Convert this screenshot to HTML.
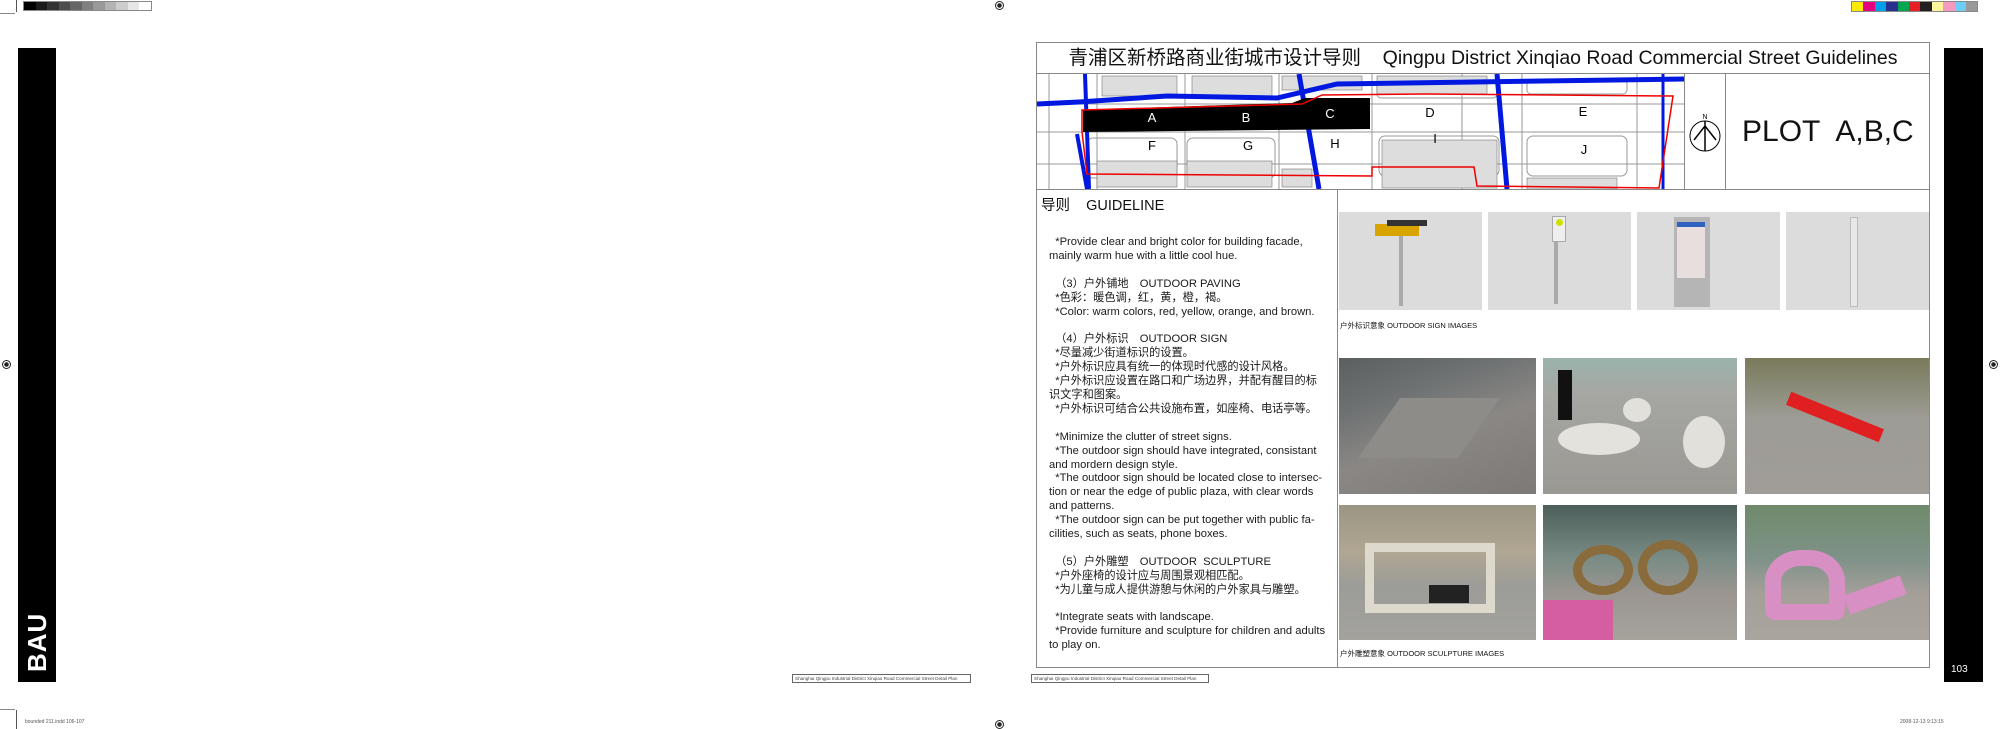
<!DOCTYPE html>
<html><head><meta charset="utf-8"><style>
*{margin:0;padding:0;box-sizing:border-box}
body{width:2000px;height:729px;background:#fff;position:relative;overflow:hidden;font-family:"Liberation Sans","Noto Sans CJK SC",sans-serif;color:#111}
.a{position:absolute}
.txt{font-size:11.2px;line-height:13.9px;white-space:pre;color:#1a1a1a}
.img{position:absolute;background:#888}
.foot{position:absolute;border:1px solid #666;font-size:4.6px;line-height:7px;padding:0 2px;color:#444;white-space:nowrap;height:9px;overflow:hidden}
.reg{position:absolute;width:9px;height:9px;border-radius:50%;border:1px solid #222;background:radial-gradient(circle,#222 0 2px,transparent 2.5px)}
</style></head><body>
<div class="a" style="left:16px;top:0;width:1px;height:12px;background:#555"></div>
<div class="a" style="left:23px;top:1px;display:flex;border:1px solid #888">
<div style="width:11.5px;height:8px;background:#000"></div><div style="width:11.5px;height:8px;background:#1a1a1a"></div><div style="width:11.5px;height:8px;background:#333"></div><div style="width:11.5px;height:8px;background:#4d4d4d"></div><div style="width:11.5px;height:8px;background:#666"></div><div style="width:11.5px;height:8px;background:#808080"></div><div style="width:11.5px;height:8px;background:#999"></div><div style="width:11.5px;height:8px;background:#b3b3b3"></div><div style="width:11.5px;height:8px;background:#ccc"></div><div style="width:11.5px;height:8px;background:#e6e6e6"></div><div style="width:11.5px;height:8px;background:#fff"></div></div>
<div class="a" style="left:1851px;top:1px;display:flex;border:1px solid #888">
<div style="width:11.4px;height:9px;background:#ffea00"></div><div style="width:11.4px;height:9px;background:#e5007f"></div><div style="width:11.4px;height:9px;background:#00a0e9"></div><div style="width:11.4px;height:9px;background:#2a2f8f"></div><div style="width:11.4px;height:9px;background:#00a651"></div><div style="width:11.4px;height:9px;background:#e71f23"></div><div style="width:11.4px;height:9px;background:#231f20"></div><div style="width:11.4px;height:9px;background:#fff59a"></div><div style="width:11.4px;height:9px;background:#f49ac1"></div><div style="width:11.4px;height:9px;background:#6dcff6"></div><div style="width:11.4px;height:9px;background:#999"></div></div>
<div class="reg" style="left:995px;top:1px"></div>
<div class="reg" style="left:995px;top:720px"></div>
<div class="reg" style="left:2px;top:360px"></div>
<div class="reg" style="left:1989px;top:360px"></div>
<div class="a" style="left:0;top:13px;width:15px;height:1px;background:#888"></div>
<div class="a" style="left:0;top:709px;width:15px;height:1px;background:#888"></div>
<div class="a" style="left:16px;top:710px;width:1px;height:19px;background:#555"></div>
<div class="a" style="left:25px;top:719px;font-size:5px;color:#555">bounded 211.indd 106-107</div>
<div class="a" style="left:1900px;top:719px;font-size:5px;color:#555">2008-12-13 9:13:15</div>

<div class="a" style="left:18px;top:48px;width:38px;height:634px;background:#000"></div>
<div class="a" style="left:22px;color:#fff;font-weight:bold;font-size:26px;transform:rotate(-90deg);transform-origin:0 0;letter-spacing:1px;top:672px">BAU</div>

<div class="a" style="left:1944px;top:48px;width:39px;height:634px;background:#000"></div>
<div class="a" style="left:1951px;top:664px;color:#fff;font-size:10px">103</div>

<div class="a" style="left:1036px;top:42px;width:894px;height:626px;border:1px solid #888"></div>
<div class="a" style="left:1036px;top:73px;width:894px;height:1px;background:#888"></div>
<div class="a" style="left:1036px;top:189px;width:894px;height:1px;background:#888"></div>
<div class="a" style="left:1337px;top:189px;width:1px;height:479px;background:#888"></div>
<div class="a" style="left:1684px;top:73px;width:1px;height:116px;background:#888"></div>
<div class="a" style="left:1725px;top:73px;width:1px;height:116px;background:#888"></div>
<div class="a" style="left:1036px;top:45px;width:894px;text-align:center;font-size:19.5px;line-height:26px;white-space:nowrap">青浦区新桥路商业街城市设计导则&nbsp;&nbsp;&nbsp; Qingpu District Xinqiao Road Commercial Street Guidelines</div>

<svg class="a" style="left:1037px;top:74px" width="647" height="115" viewBox="0 0 647 115">
<rect width="647" height="115" fill="#fff"/>
<g stroke="#999" fill="none" stroke-width="1">
<path d="M0 30 H647 M0 58 H647 M0 90 H647"/>
<path d="M12 0 V115 M60 0 V115 M148 0 V115 M242 0 V115 M335 0 V115 M425 0 V115 M485 0 V115 M600 0 V115"/>
<rect x="50" y="64" width="90" height="40" rx="6"/><rect x="150" y="64" width="88" height="40" rx="6"/><rect x="342" y="62" width="120" height="40" rx="6"/><rect x="490" y="62" width="100" height="40" rx="6"/>
<rect x="340" y="6" width="120" height="18" rx="4"/><rect x="490" y="6" width="100" height="14" rx="4"/>
</g>
<g fill="#ddd" stroke="#777" stroke-width=".6">
<rect x="65" y="2" width="75" height="20"/><rect x="155" y="2" width="80" height="20"/><rect x="245" y="2" width="80" height="14"/><rect x="340" y="2" width="110" height="18"/>
<rect x="60" y="87" width="80" height="26"/><rect x="150" y="87" width="85" height="26"/><rect x="245" y="95" width="30" height="18"/><rect x="345" y="66" width="115" height="48"/><rect x="490" y="104" width="90" height="11"/>
</g>
<path d="M0 30 L42 28 L130 22 L240 24 L300 10 L647 5" stroke="#0018e0" stroke-width="5" fill="none"/>
<path d="M48 0 L52 115" stroke="#0018e0" stroke-width="4"/>
<path d="M40 60 L50 115" stroke="#0018e0" stroke-width="4"/>
<path d="M262 0 L282 115" stroke="#0018e0" stroke-width="5"/>
<path d="M460 0 L470 115" stroke="#0018e0" stroke-width="5"/>
<path d="M626 0 L626 115" stroke="#0018e0" stroke-width="3"/>
<path d="M46 36 L160 32 L255 29 L268 24 L333 24 L333 55 L46 58Z" fill="#000"/>
<path d="M45 36 L265 30 L285 21 L390 20 L636 22 L622 114 L440 112 L437 93 L335 93 L335 102 L50 100 L45 58Z" fill="none" stroke="#e00" stroke-width="1.5"/>
<g font-size="13" font-family="Liberation Sans,sans-serif" text-anchor="middle">
<text x="115" y="48" fill="#fff">A</text><text x="209" y="48" fill="#fff">B</text><text x="293" y="44" fill="#fff">C</text>
<text x="393" y="43">D</text><text x="546" y="42">E</text><text x="115" y="76">F</text><text x="211" y="76">G</text><text x="298" y="74">H</text><text x="398" y="69">I</text><text x="547" y="80">J</text>
</g>
</svg>
<svg class="a" style="left:1687px;top:112px" width="36" height="42" viewBox="0 0 36 42">
<circle cx="18" cy="24" r="15" fill="none" stroke="#000" stroke-width="1"/>
<path d="M18 9 V39 M7 28 L18 14 L29 28" stroke="#000" fill="none" stroke-width="1.5"/>
<text x="18" y="7" font-size="7" text-anchor="middle" font-family="Liberation Sans">N</text></svg>
<div class="a" style="left:1742px;top:114px;font-size:30px;line-height:36px;white-space:nowrap">PLOT&nbsp; A,B,C</div>

<div class="a" style="left:1041px;top:194px;font-size:14.5px">导则&nbsp;&nbsp;&nbsp; GUIDELINE</div>
<div class="a txt" style="left:1049px;top:236px">  *Provide clear and bright color for building facade,
mainly warm hue with a little cool hue.

  （3）户外铺地　OUTDOOR PAVING
  *色彩：暖色调，红，黄，橙，褐。
  *Color: warm colors, red, yellow, orange, and brown.

  （4）户外标识　OUTDOOR SIGN
  *尽量减少街道标识的设置。
  *户外标识应具有统一的体现时代感的设计风格。
  *户外标识应设置在路口和广场边界，并配有醒目的标
识文字和图案。
  *户外标识可结合公共设施布置，如座椅、电话亭等。

  *Minimize the clutter of street signs.
  *The outdoor sign should have integrated, consistant
and mordern design style.
  *The outdoor sign should be located close to intersec-
tion or near the edge of public plaza, with clear words
and patterns.
  *The outdoor sign can be put together with public fa-
cilities, such as seats, phone boxes.

  （5）户外雕塑　OUTDOOR  SCULPTURE
  *户外座椅的设计应与周围景观相匹配。
  *为儿童与成人提供游憩与休闲的户外家具与雕塑。

  *Integrate seats with landscape.
  *Provide furniture and sculpture for children and adults
to play on.</div>

<div class="img" style="left:1339px;top:212px;width:143px;height:98px;background:#dcdcdc"><div class="a" style="left:60px;top:14px;width:4px;height:80px;background:#aaa"></div><div class="a" style="left:36px;top:12px;width:44px;height:12px;background:#d8a400"></div><div class="a" style="left:48px;top:8px;width:40px;height:6px;background:#333"></div></div>
<div class="img" style="left:1488px;top:212px;width:143px;height:98px;background:#dcdcdc"><div class="a" style="left:66px;top:4px;width:4px;height:88px;background:#aaa"></div><div class="a" style="left:64px;top:4px;width:14px;height:26px;background:#eee;border:1px solid #aaa"></div><div class="a" style="left:68px;top:7px;width:7px;height:7px;border-radius:50%;background:#cde000"></div></div>
<div class="img" style="left:1637px;top:212px;width:143px;height:98px;background:#dcdcdc"><div class="a" style="left:37px;top:5px;width:36px;height:90px;background:#b5b5b5"></div><div class="a" style="left:40px;top:10px;width:28px;height:56px;background:#e9dede"></div><div class="a" style="left:40px;top:10px;width:28px;height:5px;background:#3060c0"></div></div>
<div class="img" style="left:1786px;top:212px;width:143px;height:98px;background:#dcdcdc"><div class="a" style="left:64px;top:5px;width:8px;height:90px;background:#e8e8e8;border:1px solid #bbb"></div></div>
<div class="a" style="left:1340px;top:320px;font-size:7.5px;white-space:nowrap">户外标识意象 OUTDOOR SIGN IMAGES</div>

<div class="img" style="left:1339px;top:358px;width:197px;height:136px;background:linear-gradient(160deg,#5b5f60 0%,#707374 30%,#8a8784 55%,#7c7977 100%)"><div class="a" style="left:40px;top:40px;width:100px;height:60px;background:#8e8c88;transform:skewX(-35deg)"></div></div>
<div class="img" style="left:1543px;top:358px;width:194px;height:136px;background:linear-gradient(180deg,#9ab3ac 0%,#a6a7a3 25%,#9a9893 100%)"><div class="a" style="left:15px;top:12px;width:14px;height:50px;background:#111"></div><div class="a" style="left:15px;top:65px;width:82px;height:32px;border-radius:50%;background:#e4e2dc"></div><div class="a" style="left:140px;top:58px;width:42px;height:52px;border-radius:50%;background:#e2e0da"></div><div class="a" style="left:80px;top:40px;width:28px;height:24px;border-radius:50%;background:#e2e0da"></div></div>
<div class="img" style="left:1745px;top:358px;width:184px;height:136px;background:linear-gradient(180deg,#7a7a5a 0%,#8d8e7c 25%,#9e9c96 45%,#a09d99 100%)"><div class="a" style="left:40px;top:52px;width:100px;height:14px;background:#e02020;transform:rotate(22deg)"></div></div>
<div class="img" style="left:1339px;top:505px;width:197px;height:135px;background:linear-gradient(180deg,#9a9683 0%,#b0a693 35%,#9c9c98 60%,#a3a29d 100%)"><div class="a" style="left:26px;top:38px;width:130px;height:70px;border:9px solid #ddd9cc"></div><div class="a" style="left:90px;top:80px;width:40px;height:18px;background:#222"></div></div>
<div class="img" style="left:1543px;top:505px;width:194px;height:135px;background:linear-gradient(180deg,#4c5f5a 0%,#7a8c85 40%,#9a9590 65%,#a6a29c 100%)"><div class="a" style="left:0;top:95px;width:70px;height:40px;background:#d45ea0"></div><div class="a" style="left:30px;top:40px;width:60px;height:50px;border:9px solid #8a6b3c;border-radius:50%"></div><div class="a" style="left:95px;top:35px;width:60px;height:55px;border:9px solid #8a6b3c;border-radius:50%"></div></div>
<div class="img" style="left:1745px;top:505px;width:184px;height:135px;background:linear-gradient(180deg,#6f8a6a 0%,#7f9289 40%,#a49f99 65%,#aaa49e 100%)"><div class="a" style="left:20px;top:45px;width:80px;height:70px;border:16px solid #d78fc4;border-radius:45% 45% 10px 10px"></div><div class="a" style="left:100px;top:80px;width:60px;height:20px;background:#d78fc4;transform:rotate(-20deg)"></div></div>
<div class="a" style="left:1340px;top:648px;font-size:7.5px;white-space:nowrap">户外雕塑意象 OUTDOOR SCULPTURE IMAGES</div>

<div class="foot" style="left:792px;top:674px;width:179px">Shanghai Qingpu Industrial District Xinqiao Road Commercial Street Detail Plan</div>
<div class="foot" style="left:1031px;top:674px;width:178px">Shanghai Qingpu Industrial District Xinqiao Road Commercial Street Detail Plan</div>
</body></html>
